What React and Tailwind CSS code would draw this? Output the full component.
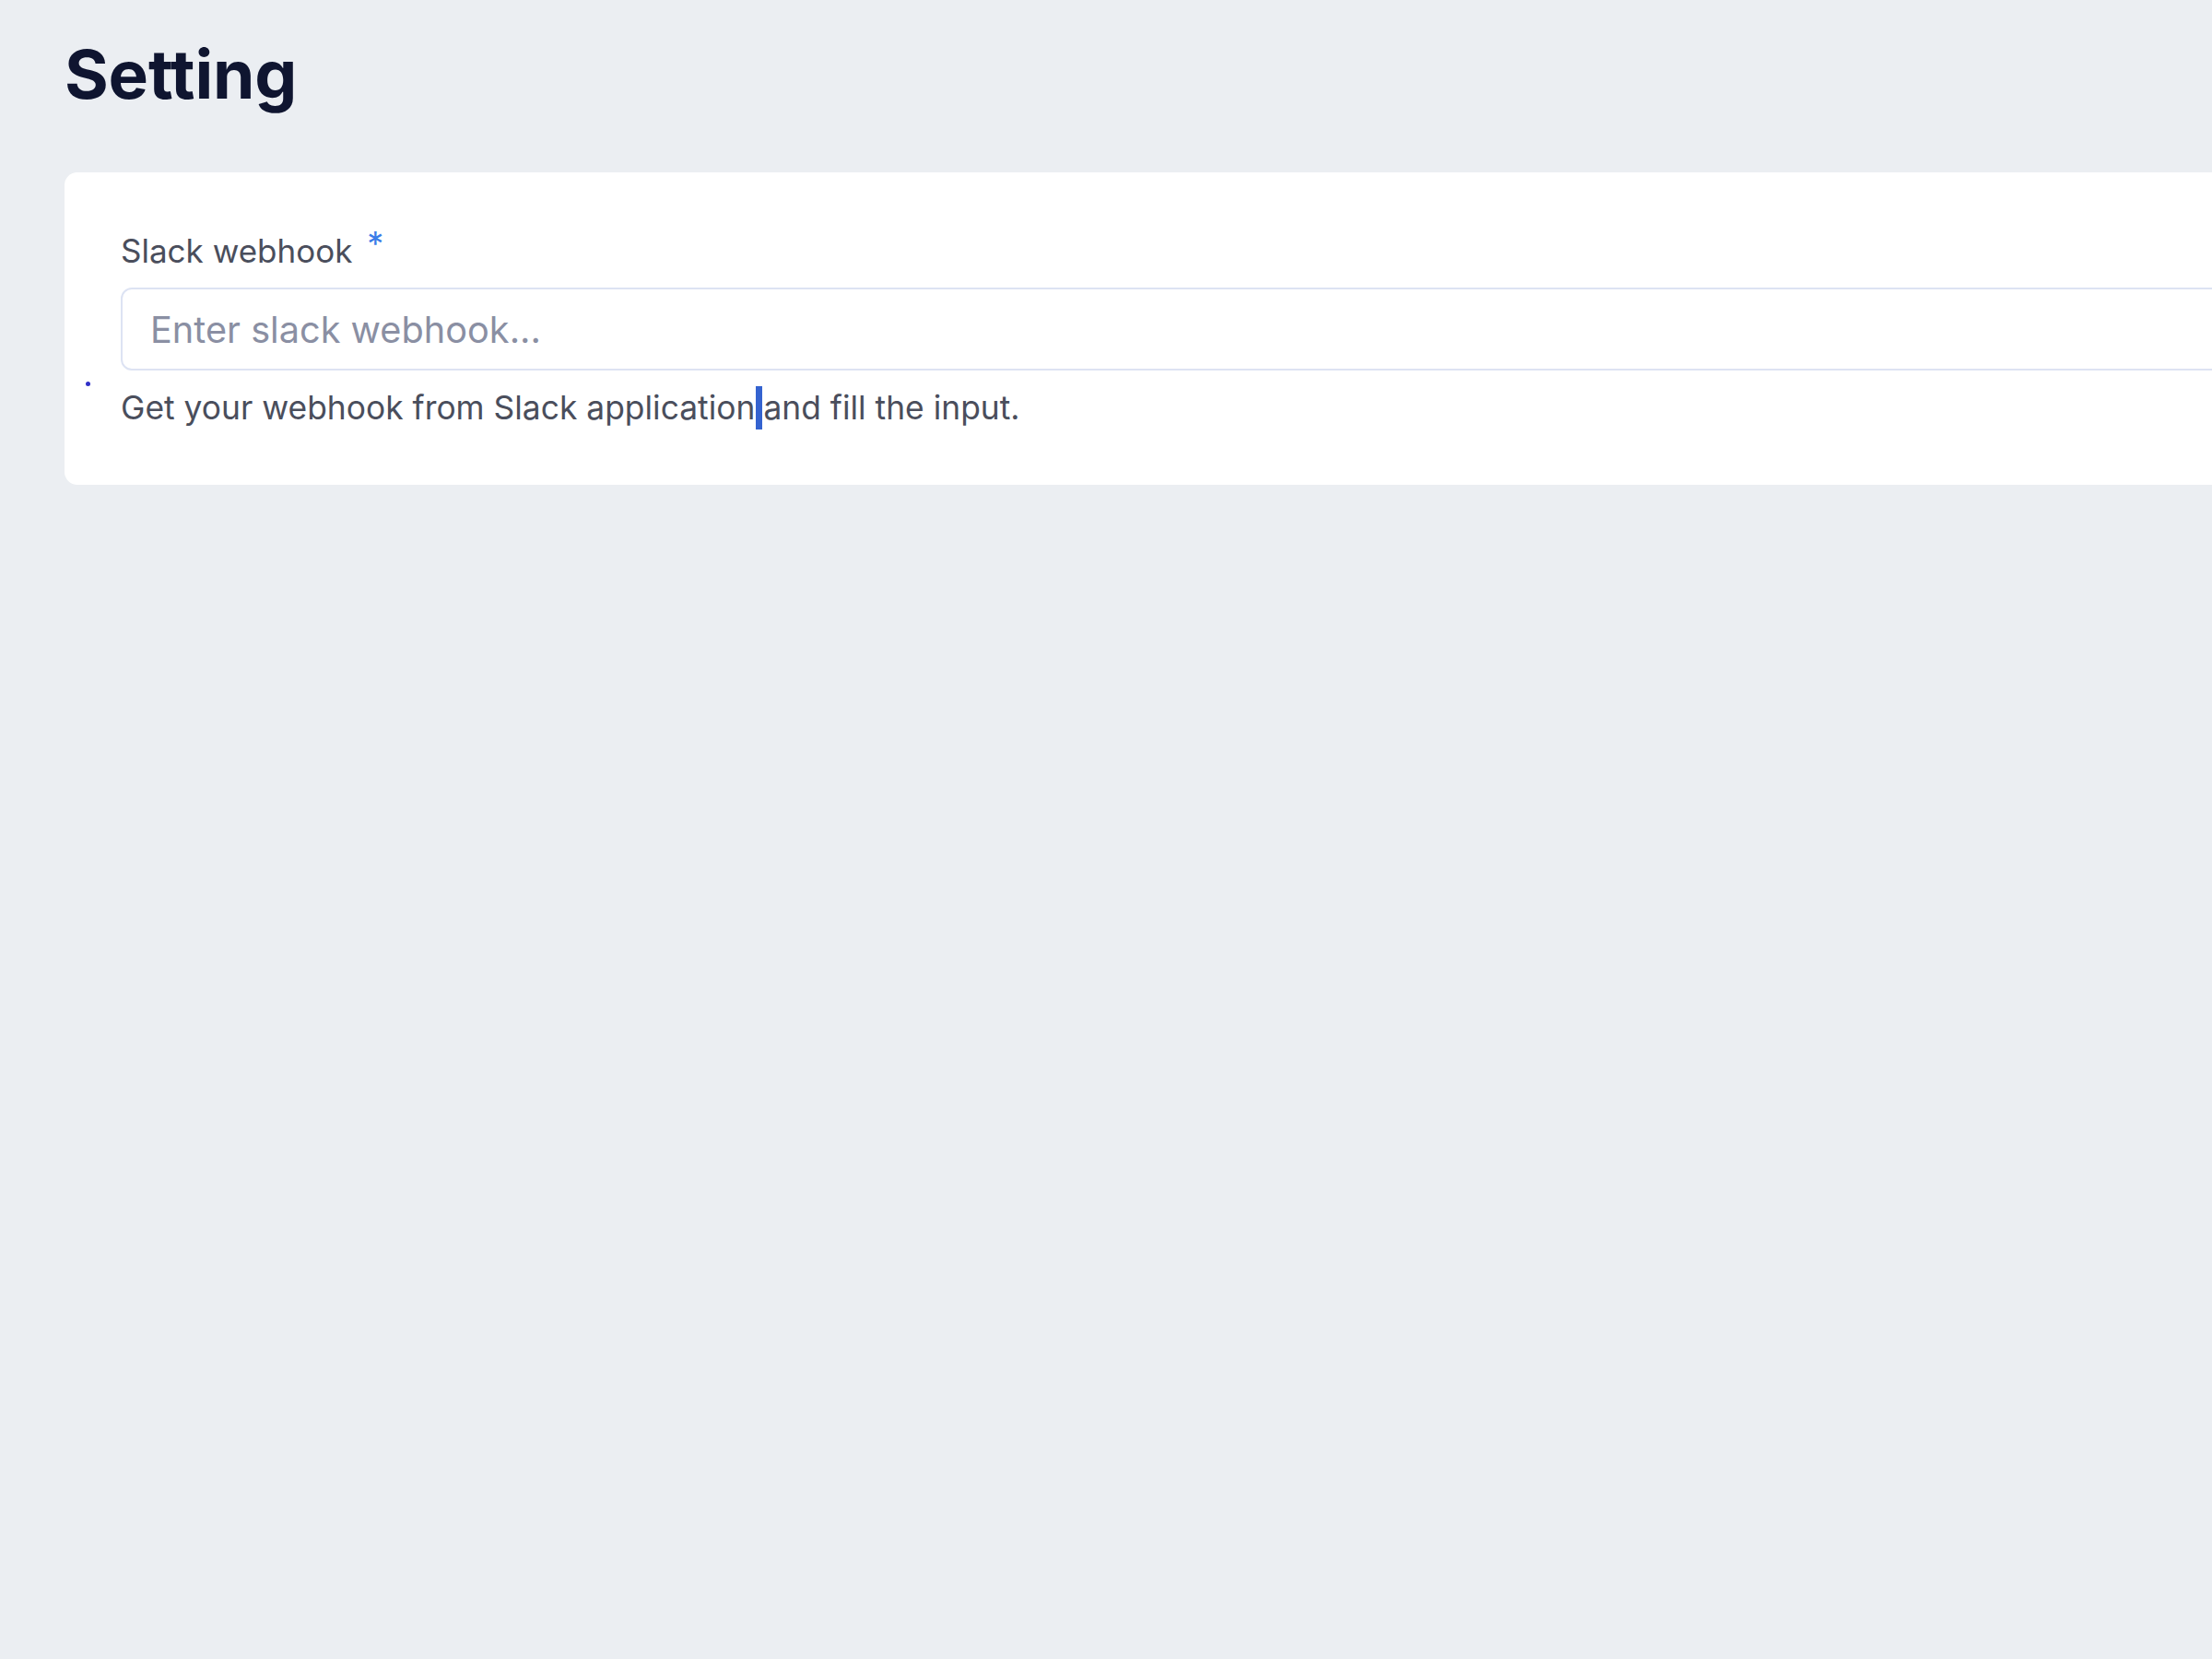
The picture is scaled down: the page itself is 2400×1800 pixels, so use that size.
export default function App() {
  return (
    <div
      className="w-[2400px] h-[1800px] overflow-hidden bg-[#ebeef2]"
      style={{ fontFamily: "Inter, 'Noto Sans', sans-serif" }}
    >
      <div className="pl-[70px] pt-[36px]">
        <h1 className="text-[73px] leading-[90px] font-bold text-[#0f1530] tracking-[-0.2px]">
          Setting
        </h1>
        <div className="relative mt-[61px] w-[2400px] h-[339px] bg-white rounded-[14px] pl-[61px] pt-[63px]">
          <span className="absolute left-[23px] top-[227px] w-[5px] h-[5px] rounded-full bg-[#3030c8]" />
          <label className="flex items-start text-[35px] leading-[44px] text-[#4a4e5c]">
            <span>Slack webhook</span>
            <span className="ml-[16px] -mt-[4px] text-[36px] leading-[36px] text-[#3b7de8]">*</span>
          </label>
          <div className="mt-[18px] h-[90px] rounded-[12px] border-2 border-[#dde3f3] flex items-center pl-[30px] pt-[3px]">
            <span className="text-[39.7px] text-[#8a8fa3]">Enter slack webhook...</span>
          </div>
          <p className="mt-[19px] text-[35.4px] leading-[44px] text-[#4a4e5c]">
            Get your webhook from Slack application
            <span className="inline-block align-middle w-[7px] h-[47px] bg-[#3463d0] mx-[1px] -mt-[6px]" />
            and fill the input.
          </p>
        </div>
      </div>
    </div>
  );
}
